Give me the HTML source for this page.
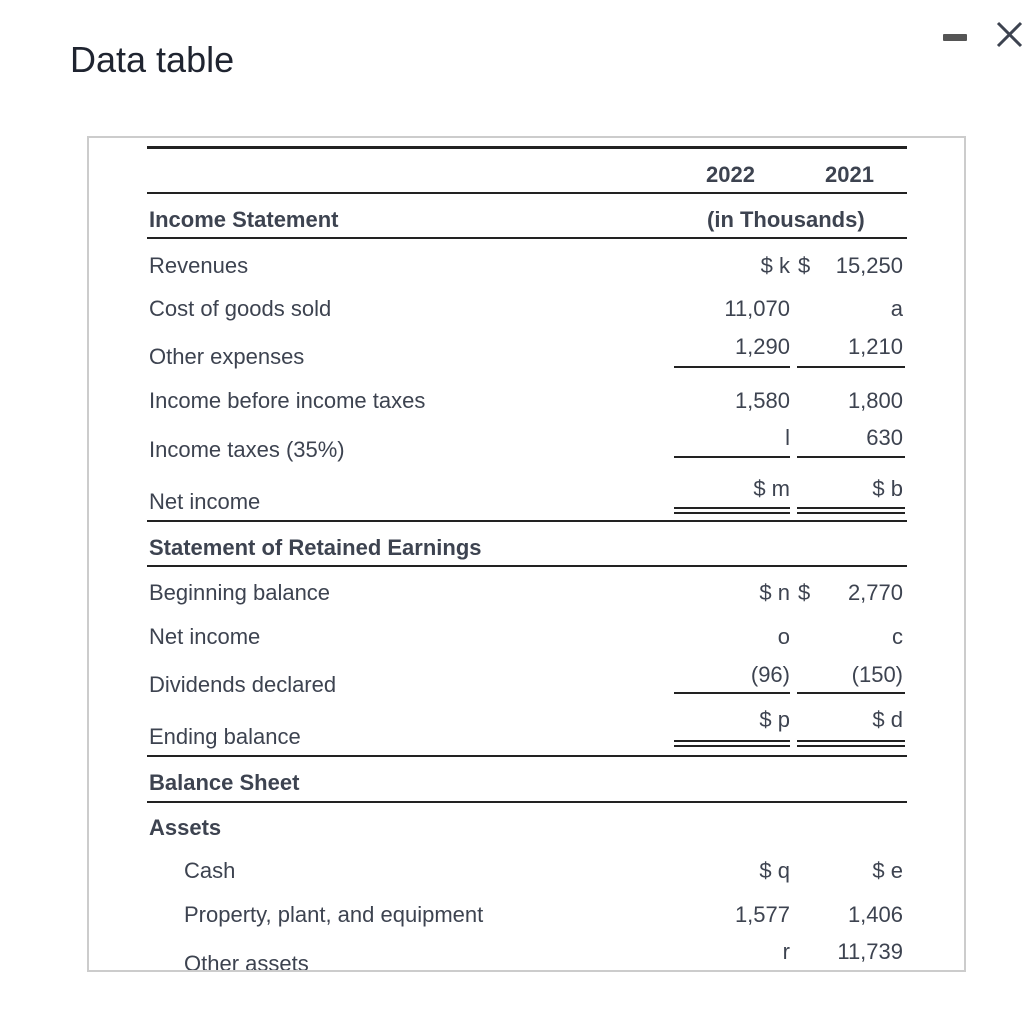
<!DOCTYPE html>
<html><head><meta charset="utf-8"><style>
html,body{margin:0;width:1024px;height:1019px;overflow:hidden}
body{background:#fff;position:relative;font-family:"Liberation Sans",Arial,sans-serif;color:#3d4350}
.t{position:absolute;font-size:22px;line-height:24px;white-space:nowrap}
.b{font-weight:bold}
.r{text-align:right}
.l{position:absolute;background:#222;height:2px}
</style></head><body>
<div class="t" style="left:70px;top:40px;font-size:36px;line-height:40px;color:#1f2430">Data table</div>
<div style="position:absolute;left:943px;top:34px;width:24px;height:7px;background:#555;border-radius:1px"></div>
<svg style="position:absolute;left:994px;top:19px" width="30" height="30"><path d="M4 4L27 27M27 4L4 27" stroke="#3d4350" stroke-width="3"/></svg>
<div style="position:absolute;left:87px;top:136px;width:875px;height:834px;border:2px solid #ccc;border-bottom:2px solid #ccc"></div>

<div class="l" style="left:147px;top:146px;width:760px;height:3px"></div>
<div class="l" style="left:147px;top:192px;width:760px"></div>
<div class="l" style="left:147px;top:237px;width:760px"></div>
<div class="l" style="left:674px;top:366px;width:116px"></div>
<div class="l" style="left:797px;top:366px;width:108px"></div>
<div class="l" style="left:674px;top:456px;width:116px"></div>
<div class="l" style="left:797px;top:456px;width:108px"></div>
<div class="l" style="left:674px;top:507px;width:116px"></div>
<div class="l" style="left:797px;top:507px;width:108px"></div>
<div class="l" style="left:674px;top:512px;width:116px"></div>
<div class="l" style="left:797px;top:512px;width:108px"></div>
<div class="l" style="left:147px;top:520px;width:760px"></div>
<div class="l" style="left:147px;top:565px;width:760px"></div>
<div class="l" style="left:674px;top:692px;width:116px"></div>
<div class="l" style="left:797px;top:692px;width:108px"></div>
<div class="l" style="left:674px;top:740px;width:116px"></div>
<div class="l" style="left:797px;top:740px;width:108px"></div>
<div class="l" style="left:674px;top:745px;width:116px"></div>
<div class="l" style="left:797px;top:745px;width:108px"></div>
<div class="l" style="left:147px;top:755px;width:760px"></div>
<div class="l" style="left:147px;top:801px;width:760px"></div>

<div class="t b" style="left:706px;top:163px">2022</div>
<div class="t b" style="left:825px;top:163px">2021</div>
<div class="t b" style="left:707px;top:208px">(in Thousands)</div>

<div class="t b" style="left:149px;top:208px">Income Statement</div>
<div class="t" style="left:149px;top:254px">Revenues</div>
<div class="t" style="left:149px;top:297px">Cost of goods sold</div>
<div class="t" style="left:149px;top:345px">Other expenses</div>
<div class="t" style="left:149px;top:389px">Income before income taxes</div>
<div class="t" style="left:149px;top:438px">Income taxes (35%)</div>
<div class="t" style="left:149px;top:490px">Net income</div>
<div class="t b" style="left:149px;top:536px">Statement of Retained Earnings</div>
<div class="t" style="left:149px;top:581px">Beginning balance</div>
<div class="t" style="left:149px;top:625px">Net income</div>
<div class="t" style="left:149px;top:673px">Dividends declared</div>
<div class="t" style="left:149px;top:725px">Ending balance</div>
<div class="t b" style="left:149px;top:771px">Balance Sheet</div>
<div class="t b" style="left:149px;top:816px">Assets</div>
<div class="t" style="left:184px;top:859px">Cash</div>
<div class="t" style="left:184px;top:903px">Property, plant, and equipment</div>
<div class="t" style="left:184px;top:952px">Other assets</div>

<div class="t r" style="right:234px;top:254px">$ k</div>
<div class="t" style="left:798px;top:254px">$</div>
<div class="t r" style="right:121px;top:254px">15,250</div>
<div class="t r" style="right:234px;top:297px">11,070</div>
<div class="t r" style="right:121px;top:297px">a</div>
<div class="t r" style="right:234px;top:335px">1,290</div>
<div class="t r" style="right:121px;top:335px">1,210</div>
<div class="t r" style="right:234px;top:389px">1,580</div>
<div class="t r" style="right:121px;top:389px">1,800</div>
<div class="t r" style="right:234px;top:426px">l</div>
<div class="t r" style="right:121px;top:426px">630</div>
<div class="t r" style="right:234px;top:477px">$ m</div>
<div class="t r" style="right:121px;top:477px">$ b</div>
<div class="t r" style="right:234px;top:581px">$ n</div>
<div class="t" style="left:798px;top:581px">$</div>
<div class="t r" style="right:121px;top:581px">2,770</div>
<div class="t r" style="right:234px;top:625px">o</div>
<div class="t r" style="right:121px;top:625px">c</div>
<div class="t r" style="right:234px;top:663px">(96)</div>
<div class="t r" style="right:121px;top:663px">(150)</div>
<div class="t r" style="right:234px;top:708px">$ p</div>
<div class="t r" style="right:121px;top:708px">$ d</div>
<div class="t r" style="right:234px;top:859px">$ q</div>
<div class="t r" style="right:121px;top:859px">$ e</div>
<div class="t r" style="right:234px;top:903px">1,577</div>
<div class="t r" style="right:121px;top:903px">1,406</div>
<div class="t r" style="right:234px;top:940px">r</div>
<div class="t r" style="right:121px;top:940px">11,739</div>
<div style="position:absolute;left:87px;top:970px;width:879px;height:49px;background:#fff;border-top:2px solid #ccc"></div>
</body></html>
